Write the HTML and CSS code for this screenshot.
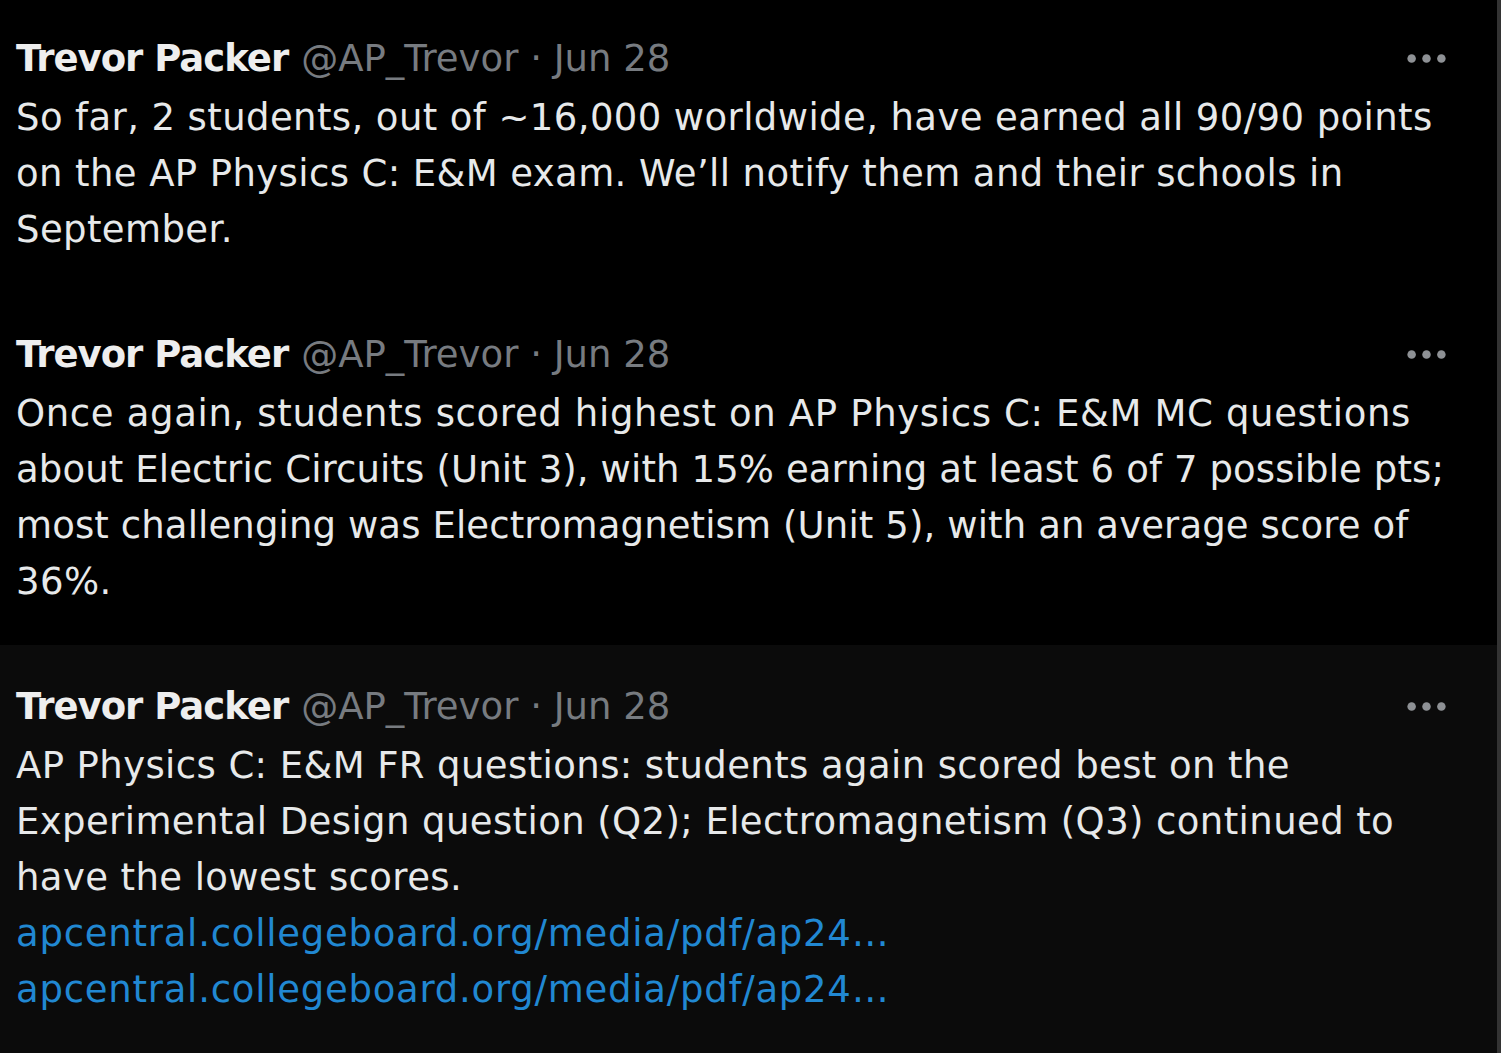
FILE: index.html
```html
<!DOCTYPE html>
<html lang="en">
<head>
<meta charset="utf-8">
<title>Trevor Packer tweets</title>
<link rel="stylesheet" href="styles.css">
</head>
<body>
<main class="feed">
  <article class="tweet tweet-first">
    <header class="tweet-head">
      <span class="name">Trevor Packer</span>
      <span class="meta">@AP_Trevor · Jun 28</span>
      <svg class="more" viewBox="0 0 24 24" aria-hidden="true"><circle cx="5" cy="12" r="2"/><circle cx="12" cy="12" r="2"/><circle cx="19" cy="12" r="2"/></svg>
    </header>
    <p class="tweet-text">So far, 2 students, out of ~16,000 worldwide, have earned all 90/90 points<br>on the AP Physics C: E&amp;M exam. We’ll notify them and their schools in<br>September.</p>
  </article>
  <article class="tweet">
    <header class="tweet-head">
      <span class="name">Trevor Packer</span>
      <span class="meta">@AP_Trevor · Jun 28</span>
      <svg class="more" viewBox="0 0 24 24" aria-hidden="true"><circle cx="5" cy="12" r="2"/><circle cx="12" cy="12" r="2"/><circle cx="19" cy="12" r="2"/></svg>
    </header>
    <p class="tweet-text"><span class="wide">Once again, students scored highest on AP Physics C: E&amp;M MC questions</span><br><span class="tight">about Electric Circuits (Unit 3), with 15% earning at least 6 of 7 possible pts;</span><br><span class="tight">most challenging was Electromagnetism (Unit 5), with an average score of</span><br>36%.</p>
  </article>
  <article class="tweet tweet-hover">
    <header class="tweet-head">
      <span class="name">Trevor Packer</span>
      <span class="meta">@AP_Trevor · Jun 28</span>
      <svg class="more" viewBox="0 0 24 24" aria-hidden="true"><circle cx="5" cy="12" r="2"/><circle cx="12" cy="12" r="2"/><circle cx="19" cy="12" r="2"/></svg>
    </header>
    <p class="tweet-text">AP Physics C: E&amp;M FR questions: students again scored best on the<br>Experimental Design question (Q2); Electromagnetism (Q3) continued to<br>have the lowest scores.<br><a class="link" href="#">apcentral.collegeboard.org/media/pdf/ap24…</a><br><a class="link" href="#">apcentral.collegeboard.org/media/pdf/ap24…</a></p>
  </article>
</main>
</body>
</html>
```
FILE: styles.css
```css
html, body {
  margin: 0;
  padding: 0;
  background: #000;
}
body {
  width: 1501px;
  height: 1053px;
  overflow: hidden;
  font-family: "DejaVu Sans", "Liberation Sans", Arial, sans-serif;
  color: #e7e9ea;
}
.feed {
  width: 1497px;
  height: 1053px;
  border-right: 4px solid #333333;
  display: flex;
  flex-direction: column;
}
.tweet {
  padding: 33px 15px 35px 16px;
  background: #000;
}
.tweet-first {
  padding-top: 30px;
}
.tweet-hover {
  background: #0b0b0b;
  flex: 1;
}
.tweet-head {
  display: flex;
  align-items: center;
  height: 56px;
  margin-bottom: 4px;
  font-size: 37px;
  white-space: nowrap;
}
.name {
  font-weight: 700;
  color: #eeeeee;
  margin-right: 13px;
  letter-spacing: -1px;
}
.meta {
  color: #777b80;
  letter-spacing: 0;
}
.more {
  width: 51px;
  height: 51px;
  margin-left: auto;
  margin-right: 30px;
  fill: #8e9195;
}
.tweet-text {
  margin: 0;
  font-size: 37px;
  line-height: 56px;
  letter-spacing: 0.4px;
  white-space: nowrap;
  color: #e7e9ea;
}
.tight {
  letter-spacing: 0.12px;
}
.wide {
  letter-spacing: 0.65px;
}
.link {
  color: #2188d2;
  letter-spacing: 0.75px;
  text-decoration: none;
}
```
